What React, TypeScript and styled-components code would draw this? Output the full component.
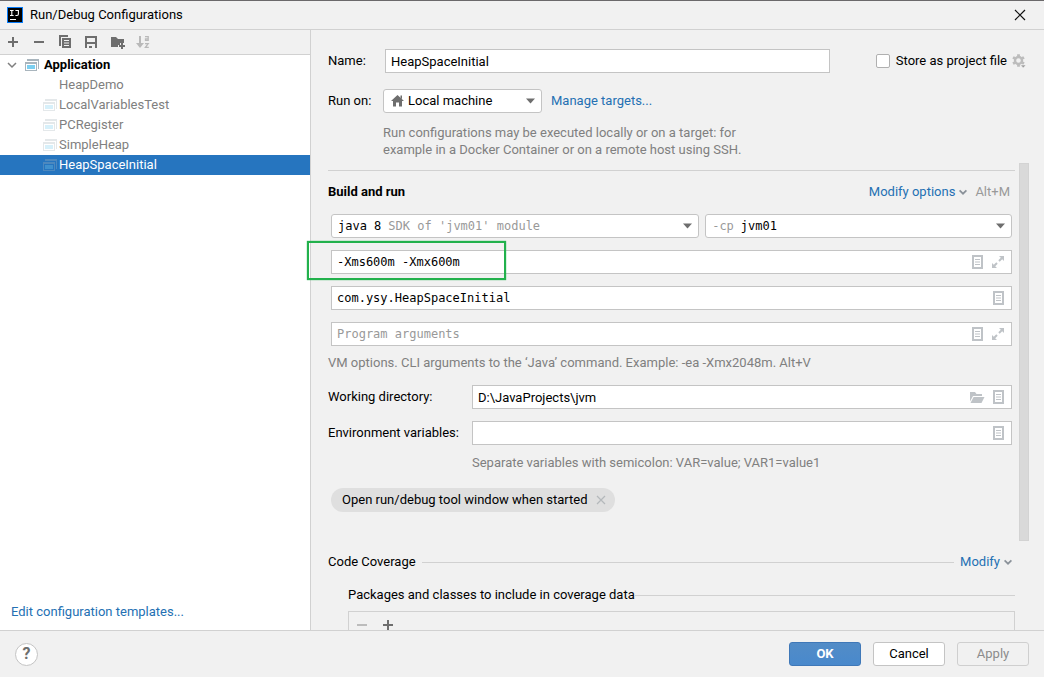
import React from 'react';
import styled, { createGlobalStyle, css } from 'styled-components';

const color = {
  bg: '#f1f1f1',
  line: '#d1d1d1',
  field: '#c4c4c4',
  text: '#000000',
  muted: '#808080',
  faint: '#999999',
  link: '#2470b3',
  icon: '#6e6e6e',
  iconOff: '#bfc3c7',
  select: '#2675bf',
};

const ui = `Roboto, 'Noto Sans', sans-serif`;
const mono = `'DejaVu Sans Mono', 'Liberation Mono', monospace`;

const GlobalStyle = createGlobalStyle`
  *, *::before, *::after { box-sizing: border-box; }
  body {
    margin: 0;
    background: ${color.bg};
    color: ${color.text};
    font: 13px/20px ${ui};
  }
  button, input, select { font: inherit; color: inherit; }
  svg { display: block; flex: none; }
`;

const Dialog = styled.div`
  display: flex;
  flex-direction: column;
  height: 100vh;
  border-top: 1px solid #6b696b;
`;

const TitleBar = styled.header`
  display: flex;
  align-items: center;
  gap: 7px;
  height: 29px;
  flex: none;
  padding: 0 18px 0 7px;
  border-bottom: 1px solid ${color.line};
`;

const Title = styled.h1`
  flex: 1;
  margin: 0;
  font-size: 13px;
  font-weight: 400;
`;

const PlainButton = styled.button`
  display: flex;
  align-items: center;
  justify-content: center;
  padding: 0;
  border: 0;
  background: none;
`;

const Body = styled.div`
  display: flex;
  flex: 1;
  min-height: 0;
`;

const Sidebar = styled.aside`
  display: flex;
  flex-direction: column;
  flex: 0 0 311px;
  border-right: 1px solid ${color.line};
  background: #ffffff;
`;

const Toolbar = styled.div`
  display: flex;
  height: 25px;
  background: ${color.bg};
  border-bottom: 1px solid ${color.line};
`;

const ToolButton = styled(PlainButton)`
  width: 26px;
`;

const Tree = styled.ul`
  flex: 1;
  margin: 0;
  padding: 0;
  list-style: none;
`;

const TreeRow = styled.li<{ $child?: boolean; $selected?: boolean }>`
  display: flex;
  align-items: center;
  height: 20px;
  padding-left: ${p => (p.$child ? 42 : 4)}px;
  gap: ${p => (p.$child ? 1 : 4)}px;
  color: ${p => (p.$child ? color.muted : color.text)};
  font-weight: ${p => (p.$child ? 400 : 700)};
  ${p => p.$selected && css`
    background: ${color.select};
    color: #ffffff;
  `}
`;

const IconSlot = styled.span<{ $dim?: boolean }>`
  display: flex;
  width: 16px;
  height: 16px;
  opacity: ${p => (p.$dim ? 0.3 : 1)};
`;

const Link = styled.a`
  display: inline-flex;
  align-items: center;
  gap: 4px;
  color: ${color.link};
  text-decoration: none;
`;

const SidebarFoot = styled.div`
  padding: 0 11px 8px;
`;

const Main = styled.main`
  display: flex;
  flex-direction: column;
  flex: 1;
  min-width: 0;
`;

const Head = styled.section`
  display: grid;
  grid-template-columns: 55px 1fr;
  align-items: center;
  flex: none;
  height: 133px;
  padding: 19px 17px 0;
  align-content: start;
`;

const HeadRow = styled.div`
  display: flex;
  align-items: center;
  height: 24px;
  margin-bottom: 16px;
`;

const HeadLabel = styled.label`
  height: 24px;
  line-height: 24px;
  margin-bottom: 16px;
`;

const HeadHint = styled.p`
  grid-column: 2;
  max-width: 380px;
  margin: -5px 0 0;
  line-height: 17px;
  color: ${color.muted};
`;

const Store = styled.label`
  display: flex;
  align-items: center;
  gap: 6px;
  margin: 0 4px 0 46px;
`;

const Check = styled.input`
  appearance: none;
  width: 14px;
  height: 14px;
  margin: 0;
  border: 1px solid #b0b0b0;
  border-radius: 2px;
  background: #ffffff;
`;

const Field = styled.div<{ $mono?: boolean; $inset?: boolean }>`
  position: relative;
  display: flex;
  align-items: center;
  flex: 1;
  height: 24px;
  min-width: 0;
  border: 1px solid ${color.field};
  background: #ffffff;
  margin-left: ${p => (p.$inset ? 2 : 0)}px;
  ${p => p.$mono && `font-family: ${mono}; font-size: 12px;`}
`;

const TextInput = styled.input`
  flex: 1;
  min-width: 0;
  height: 22px;
  padding: 0 5px;
  border: 0;
  outline: 0;
  background: transparent;
  &::placeholder { color: ${color.faint}; opacity: 1; }
`;

const FieldIcons = styled.div`
  display: flex;
  gap: 5px;
  padding-right: 5px;
`;

const Combo = styled.div<{ $mono?: boolean }>`
  display: flex;
  align-items: center;
  height: 24px;
  min-width: 0;
  padding: 0 6px;
  border: 1px solid ${color.field};
  border-radius: 3px;
  background: #ffffff;
  ${p => p.$mono && `font-family: ${mono}; font-size: 12px;`}
`;

const Picker = styled.select<{ $fit?: boolean }>`
  appearance: none;
  flex: ${p => (p.$fit ? 'none' : 1)};
  min-width: 0;
  height: 22px;
  padding: 0;
  border: 0;
  outline: 0;
  background: transparent;
  ${p => p.$fit && 'field-sizing: content;'}
`;

const Faint = styled.span<{ $grow?: boolean }>`
  flex: ${p => (p.$grow ? 1 : 'none')};
  padding: 0 7px;
  color: ${color.faint};
  white-space: nowrap;
`;

const LeadFaint = styled(Faint)`
  padding-left: 0;
`;

const MachineCombo = styled(Combo)`
  width: 159px;
  margin-right: 9px;
  gap: 2px;
`;

const ScrollArea = styled.div`
  display: flex;
  flex: 1;
  gap: 4px;
  min-height: 0;
  padding: 0 15px 0 17px;
  overflow-x: visible;
  overflow-y: clip;
`;

const Content = styled.div`
  flex: 1;
  min-width: 0;
`;

const Track = styled.div`
  flex: 0 0 10px;
`;

const Thumb = styled.div`
  height: 81%;
  background: #d9d9d9;
  border: 1px solid #d3d3d3;
`;

const Rule = styled.hr`
  flex: 1;
  height: 1px;
  margin: 0;
  border: 0;
  background: ${color.line};
`;

const SectionHead = styled.div`
  display: flex;
  align-items: center;
  height: 44px;
  margin-top: 7px;
  padding: 0 5px 2px 0;
  border-top: 1px solid ${color.line};
`;

const SectionTitle = styled.h2`
  flex: 1;
  margin: 0;
  font-size: 13px;
  font-weight: 700;
`;

const Shortcut = styled.span`
  margin-left: 8px;
  color: ${color.faint};
`;

const Stack = styled.div`
  display: flex;
  flex-direction: column;
  gap: 12px;
  padding: 0 3px;
`;

const StackRow = styled.div`
  display: flex;
`;

const Pair = styled.div`
  display: grid;
  grid-template-columns: 6fr 5fr;
  gap: 6px;
`;

const Highlight = styled.div`
  position: absolute;
  left: -25px;
  top: -10px;
  width: 199px;
  height: 39px;
  border: 2px solid #22b14c;
  box-shadow: 0 0 1px #22b14c;
  pointer-events: none;
`;

const Hint = styled.p`
  margin: 7px 0 12px;
  color: ${color.muted};
`;

const Form = styled.div`
  display: grid;
  grid-template-columns: 144px 1fr;
  row-gap: 12px;
  align-items: center;
  padding-right: 3px;
`;

const FormHint = styled.p`
  grid-column: 2;
  margin: -4px 0 0;
  color: ${color.muted};
`;

const Chip = styled.span`
  display: inline-flex;
  align-items: center;
  gap: 8px;
  height: 24px;
  margin: 15px 3px 0;
  padding: 0 9px 0 11px;
  border-radius: 12px;
  background: #dfdfdf;
`;

const Coverage = styled.div`
  display: flex;
  align-items: center;
  gap: 6px;
  margin-top: 40px;
  padding-right: 3px;
`;

const Group = styled.fieldset`
  margin: 13px 0 0 20px;
  padding: 0;
  border: 0;
`;

const GroupHead = styled.div`
  display: flex;
  align-items: center;
`;

const ListBar = styled.div`
  display: flex;
  height: 40px;
  margin-top: 6px;
  border: 1px solid ${color.line};
`;

const ListButton = styled(PlainButton)`
  width: 26px;
  height: 25px;
`;

const Footer = styled.footer`
  display: flex;
  align-items: center;
  gap: 12px;
  flex: none;
  height: 47px;
  padding: 0 15px;
  border-top: 1px solid ${color.line};
  background: ${color.bg};
`;

const Help = styled.button`
  width: 23px;
  height: 23px;
  margin-right: auto;
  padding: 0;
  border: 1px solid ${color.field};
  border-radius: 50%;
  background: #ffffff;
  color: ${color.icon};
  font-size: 16px;
  font-weight: 700;
  line-height: 20px;
`;

const ActionButton = styled.button<{ $primary?: boolean }>`
  width: 72px;
  height: 24px;
  padding: 0;
  border: 1px solid ${color.field};
  border-radius: 3px;
  background: #ffffff;
  line-height: 22px;
  &:disabled { background: transparent; border-color: #cfcfcf; color: #8c8c8c; }
  ${p => p.$primary && css`
    border-color: #3f78b8;
    background: linear-gradient(#528cc7, #4989cc);
    color: #ffffff;
    font-weight: 700;
  `}
`;

const svg16 = { width: 16, height: 16, viewBox: '0 0 16 16', 'aria-hidden': true } as const;

const Logo = () => (
  <svg {...svg16}>
    <rect width="16" height="16" fill="#087cfa" />
    <rect x="1" y="1" width="14" height="14" fill="#000" />
    <path d="M3 3.500h3.600M4.800 3.500v5M3 8.500h3.600M8.400 3.500h3v3.600q0 1.400-1.400 1.400h-1.600M3 12.500h6" stroke="#fff" strokeWidth="1.100" fill="none" />
  </svg>
);
const Close = () => (
  <svg width="12" height="12" viewBox="0 0 12 12" aria-hidden="true">
    <path d="M1 1l10 10M11 1L1 11" stroke="#111" strokeWidth="1.200" />
  </svg>
);
const Plus = () => (
  <svg {...svg16}><path d="M7 3h2v4h4v2H9v4H7V9H3V7h4z" fill={color.icon} /></svg>
);
const Minus = ({ off }: { off?: boolean }) => (
  <svg {...svg16}><path d="M3 7h10v2H3z" fill={off ? '#bcbcbc' : color.icon} /></svg>
);
const Copy = () => (
  <svg {...svg16}>
    <path d="M2 1h9v2H4v9H2z" fill={color.icon} />
    <path fillRule="evenodd" d="M5 4h9v10H5zM7 6v1h5V6zM7 8.500v1h5v-1zM7 11v1h5v-1z" fill={color.icon} />
  </svg>
);
const Save = () => (
  <svg {...svg16}>
    <path fillRule="evenodd" d="M2 2h12v12h-2v-4H4v4H2zM4 4v4h8V4z" fill={color.icon} />
    <path d="M6 12h3v2H6z" fill={color.icon} />
  </svg>
);
const NewFolder = () => (
  <svg {...svg16}>
    <path d="M2 3h5l2 2h6v4h-4v2H9v2H2z" fill={color.icon} />
    <path d="M12 9h2v2h2v2h-2v2h-2v-2h-2v-2h2z" fill={color.icon} />
  </svg>
);
const Sort = () => (
  <svg {...svg16} stroke="#b9b9b9" fill="none">
    <path d="M5 2v8" strokeWidth="2" />
    <path d="M1 9h8l-4 5z" fill="#b9b9b9" stroke="none" />
    <path d="M10 2.700h3.200v4.300M13.200 6.400h-2.700v-1.600h2.700" strokeWidth="1.300" />
    <path d="M10 9.600h3.200l-2.800 3.800h3.400" strokeWidth="1.300" />
  </svg>
);
const Chevron = () => (
  <svg width="8" height="8" viewBox="0 0 8 8" aria-hidden="true">
    <path d="M.6 2.300L4 5.700l3.400-3.400" stroke="#8a9199" strokeWidth="1.700" fill="none" />
  </svg>
);
const TreeChevron = () => (
  <svg {...svg16}>
    <path d="M4 6l4 4 4-4" stroke="#7f7f7f" strokeWidth="1.500" fill="none" />
  </svg>
);
const App16 = () => (
  <svg {...svg16}>
    <path d="M3 2h12v10h-1V4H3z" fill="#a9b5bd" />
    <path d="M3 2h12v1.500H3z" fill="#a9b5bd" />
    <path fillRule="evenodd" d="M1 5h12v9H1zM2 7v6h10V7z" fill="#a9b5bd" />
    <path d="M3 8h8v4H3z" fill="#7ccff0" />
  </svg>
);
const Home = () => (
  <svg {...svg16}>
    <path d="M7.500 2l6.500 6H12v5.500H9V9.500H6v4H3V8H1zM10.500 2.500H12V6L10.500 4.600z" fill={color.icon} />
  </svg>
);
const Arrow = () => (
  <svg width="9" height="6" viewBox="0 0 9 6" aria-hidden="true"><path d="M0 .5h9L4.500 5.500z" fill={color.icon} /></svg>
);
const Gear = () => (
  <svg {...svg16}>
    <g fill="none" stroke="#bcbcbc">
      <circle cx="7.500" cy="7.500" r="3.500" strokeWidth="2.400" />
      <path d="M7.500 1.200v2.400M7.500 11.400v2.400M2 4.350l2.100 1.200M10.900 9.450l2.100 1.200M2 10.650l2.100-1.200M10.900 5.550l2.100-1.200" strokeWidth="2.800" />
    </g>
    <path d="M9.500 12h5.500l-2.750 3z" fill="#9c9c9c" stroke={color.bg} strokeWidth=".6" />
  </svg>
);
const Doc = () => (
  <svg {...svg16}>
    <path fillRule="evenodd" d="M3 1h11v14H3zM5 3v10h7V3z" fill={color.iconOff} />
    <path d="M6 5h5v1H6zM6 7.500h5v1H6zM6 10h5v1H6z" fill={color.iconOff} />
  </svg>
);
const Expand = () => (
  <svg {...svg16} fill={color.iconOff}>
    <path d="M9 2h5v5l-1.800-1.800L9.700 7.700 8.300 6.300l2.500-2.500zM2 9l1.800 1.800 2.500-2.500 1.400 1.400-2.500 2.500L7 14H2z" />
  </svg>
);
const Folder = () => (
  <svg {...svg16} fill={color.iconOff}>
    <path d="M1 3h5l1.500 2H13v2H4l-3 5.500z" />
    <path d="M4.600 8H15.500L12.500 14H1.500z" />
  </svg>
);
const ChipX = () => (
  <svg width="10" height="10" viewBox="0 0 10 10" aria-hidden="true">
    <path d="M1 1l8 8M9 1L1 9" stroke="#b4b8bb" strokeWidth="1.200" />
  </svg>
);

const configs = ['HeapDemo', 'LocalVariablesTest', 'PCRegister', 'SimpleHeap', 'HeapSpaceInitial'];

const tools: [string, React.ReactNode][] = [
  ['Add', <Plus />],
  ['Remove', <Minus />],
  ['Copy', <Copy />],
  ['Save', <Save />],
  ['New folder', <NewFolder />],
  ['Sort', <Sort />],
];

export default function App() {
  return (
    <>
      <GlobalStyle />
      <Dialog>
        <TitleBar>
          <Logo />
          <Title>Run/Debug Configurations</Title>
          <PlainButton aria-label="Close"><Close /></PlainButton>
        </TitleBar>
        <Body>
          <Sidebar>
            <Toolbar>
              {tools.map(([name, icon]) => (
                <ToolButton key={name} aria-label={name}>{icon}</ToolButton>
              ))}
            </Toolbar>
            <Tree>
              <TreeRow>
                <IconSlot><TreeChevron /></IconSlot>
                <IconSlot><App16 /></IconSlot>
                Application
              </TreeRow>
              {configs.map((name, i) => (
                <TreeRow key={name} $child $selected={i === configs.length - 1}>
                  <IconSlot $dim>{i > 0 && <App16 />}</IconSlot>
                  {name}
                </TreeRow>
              ))}
            </Tree>
            <SidebarFoot><Link href="#templates">Edit configuration templates...</Link></SidebarFoot>
          </Sidebar>
          <Main>
            <Head>
              <HeadLabel htmlFor="name">Name:</HeadLabel>
              <HeadRow>
                <Field $inset><TextInput id="name" defaultValue="HeapSpaceInitial" /></Field>
                <Store><Check type="checkbox" />Store as project file</Store>
                <PlainButton aria-label="Storage settings"><Gear /></PlainButton>
              </HeadRow>
              <HeadLabel htmlFor="target">Run on:</HeadLabel>
              <HeadRow>
                <MachineCombo>
                  <Home />
                  <Picker id="target"><option>Local machine</option></Picker>
                  <Arrow />
                </MachineCombo>
                <Link href="#targets">Manage targets...</Link>
              </HeadRow>
              <HeadHint>
                Run configurations may be executed locally or on a target: for
                example in a Docker Container or on a remote host using SSH.
              </HeadHint>
            </Head>
            <ScrollArea>
              <Content>
                <SectionHead>
                  <SectionTitle>Build and run</SectionTitle>
                  <Link href="#options">Modify options<Chevron /></Link>
                  <Shortcut>Alt+M</Shortcut>
                </SectionHead>
                <Stack>
                  <Pair>
                    <Combo $mono>
                      <Picker $fit aria-label="Java runtime"><option>java 8</option></Picker>
                      <Faint $grow>SDK of 'jvm01' module</Faint>
                      <Arrow />
                    </Combo>
                    <Combo $mono>
                      <LeadFaint>-cp</LeadFaint>
                      <Picker aria-label="Classpath module"><option>jvm01</option></Picker>
                      <Arrow />
                    </Combo>
                  </Pair>
                  <StackRow>
                    <Field $mono>
                      <TextInput aria-label="VM options" defaultValue="-Xms600m -Xmx600m" />
                      <FieldIcons>
                        <PlainButton aria-label="Insert macro"><Doc /></PlainButton>
                        <PlainButton aria-label="Expand"><Expand /></PlainButton>
                      </FieldIcons>
                      <Highlight />
                    </Field>
                  </StackRow>
                  <StackRow>
                    <Field $mono>
                      <TextInput aria-label="Main class" defaultValue="com.ysy.HeapSpaceInitial" />
                      <FieldIcons>
                        <PlainButton aria-label="Browse class"><Doc /></PlainButton>
                      </FieldIcons>
                    </Field>
                  </StackRow>
                  <StackRow>
                    <Field $mono>
                      <TextInput aria-label="Program arguments" placeholder="Program arguments" />
                      <FieldIcons>
                        <PlainButton aria-label="Insert macro"><Doc /></PlainButton>
                        <PlainButton aria-label="Expand"><Expand /></PlainButton>
                      </FieldIcons>
                    </Field>
                  </StackRow>
                </Stack>
                <Hint>VM options. CLI arguments to the ‘Java’ command. Example: -ea -Xmx2048m. Alt+V</Hint>
                <Form>
                  <label htmlFor="cwd">Working directory:</label>
                  <Field>
                    <TextInput id="cwd" defaultValue="D:\JavaProjects\jvm" />
                    <FieldIcons>
                      <PlainButton aria-label="Browse"><Folder /></PlainButton>
                      <PlainButton aria-label="Insert macro"><Doc /></PlainButton>
                    </FieldIcons>
                  </Field>
                  <label htmlFor="env">Environment variables:</label>
                  <Field>
                    <TextInput id="env" />
                    <FieldIcons>
                      <PlainButton aria-label="Edit variables"><Doc /></PlainButton>
                    </FieldIcons>
                  </Field>
                  <FormHint>Separate variables with semicolon: VAR=value; VAR1=value1</FormHint>
                </Form>
                <Chip>
                  Open run/debug tool window when started
                  <PlainButton aria-label="Remove option"><ChipX /></PlainButton>
                </Chip>
                <Coverage>
                  <span>Code Coverage</span>
                  <Rule />
                  <Link href="#coverage">Modify<Chevron /></Link>
                </Coverage>
                <Group aria-label="Packages and classes">
                  <GroupHead><span>Packages and classes to include in coverage data</span><Rule /></GroupHead>
                  <ListBar>
                    <ListButton aria-label="Remove class"><Minus off /></ListButton>
                    <ListButton aria-label="Add class"><Plus /></ListButton>
                  </ListBar>
                </Group>
              </Content>
              <Track><Thumb /></Track>
            </ScrollArea>
          </Main>
        </Body>
        <Footer>
          <Help aria-label="Help">?</Help>
          <ActionButton $primary>OK</ActionButton>
          <ActionButton>Cancel</ActionButton>
          <ActionButton disabled>Apply</ActionButton>
        </Footer>
      </Dialog>
    </>
  );
}
